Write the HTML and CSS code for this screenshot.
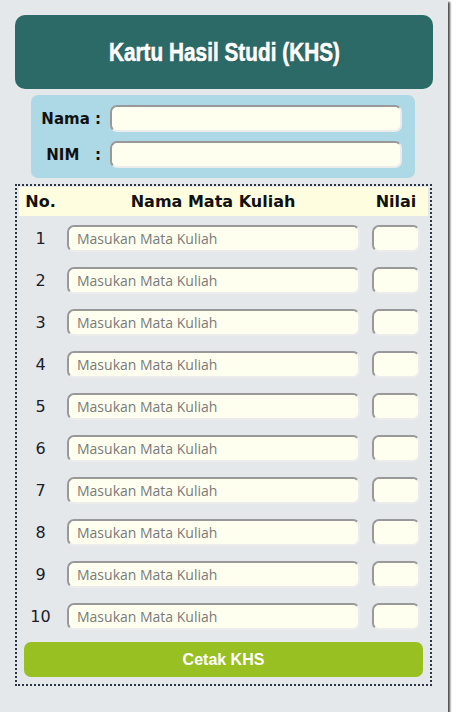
FILE: index.html
```html
<!DOCTYPE html>
<html lang="id">
<head>
<meta charset="utf-8">
<title>Kartu Hasil Studi (KHS)</title>
<link rel="stylesheet" href="styles.css">
</head>
<body>
<div class="page">
  <header class="banner"><h1 class="title">Kartu Hasil Studi (KHS)</h1></header>
  <section class="info">
    <label class="info-label" for="nama">Nama :</label>
    <input class="field info-field" id="nama" type="text">
    <label class="info-label" for="nim">NIM&nbsp;&nbsp; :</label>
    <input class="field info-field" id="nim" type="text">
  </section>
  <section class="grades">
    <div class="head">No.</div>
    <div class="head">Nama Mata Kuliah</div>
    <div class="head">Nilai</div>

    <div class="num">1</div><div class="cell-name"><input class="field name" placeholder="Masukan Mata Kuliah"></div><div class="cell-score"><input class="field score"></div>
    <div class="num">2</div><div class="cell-name"><input class="field name" placeholder="Masukan Mata Kuliah"></div><div class="cell-score"><input class="field score"></div>
    <div class="num">3</div><div class="cell-name"><input class="field name" placeholder="Masukan Mata Kuliah"></div><div class="cell-score"><input class="field score"></div>
    <div class="num">4</div><div class="cell-name"><input class="field name" placeholder="Masukan Mata Kuliah"></div><div class="cell-score"><input class="field score"></div>
    <div class="num">5</div><div class="cell-name"><input class="field name" placeholder="Masukan Mata Kuliah"></div><div class="cell-score"><input class="field score"></div>
    <div class="num">6</div><div class="cell-name"><input class="field name" placeholder="Masukan Mata Kuliah"></div><div class="cell-score"><input class="field score"></div>
    <div class="num">7</div><div class="cell-name"><input class="field name" placeholder="Masukan Mata Kuliah"></div><div class="cell-score"><input class="field score"></div>
    <div class="num">8</div><div class="cell-name"><input class="field name" placeholder="Masukan Mata Kuliah"></div><div class="cell-score"><input class="field score"></div>
    <div class="num">9</div><div class="cell-name"><input class="field name" placeholder="Masukan Mata Kuliah"></div><div class="cell-score"><input class="field score"></div>
    <div class="num">10</div><div class="cell-name"><input class="field name" placeholder="Masukan Mata Kuliah"></div><div class="cell-score"><input class="field score"></div>

    <div class="action"><button class="btn" type="button">Cetak KHS</button></div>
  </section>
</div>
</body>
</html>
```

FILE: styles.css
```css
html, body {
  margin: 0;
  padding: 0;
  background: #ffffff;
}

.page {
  box-sizing: border-box;
  width: 448px;
  height: 712px;
  padding: 15px 15px 0 15px;
  background: #e4e8ea;
  box-shadow: 2px 2px 2px #4a4a4a;
  font-family: "DejaVu Sans", Verdana, sans-serif;
}

.banner {
  height: 74px;
  border-radius: 10px;
  background: #2b6a66;
  display: flex;
  align-items: center;
  justify-content: center;
}

.title {
  margin: 0;
  font-family: "Liberation Sans", Arial, sans-serif;
  font-weight: 700;
  font-size: 26px;
  color: #ffffff;
  -webkit-text-stroke: 0.6px #ffffff;
  text-shadow: 1px 1px 0 rgba(0, 0, 0, 0.3);
  transform: scaleX(0.8);
  white-space: nowrap;
}

.info {
  margin: 6px 18px 0 16px;
  height: 83px;
  box-sizing: border-box;
  padding: 10px 12px 0 0;
  background: #add8e6;
  border-radius: 7px;
  display: grid;
  grid-template-columns: 79px 292px;
  align-content: start;
  row-gap: 9px;
  align-items: center;
}

.info-label {
  font-weight: 700;
  font-size: 15px;
  color: #111111;
  text-align: right;
  padding-right: 9px;
  white-space: nowrap;
}

.field {
  box-sizing: border-box;
  height: 27px;
  margin: 0;
  padding: 0 8px;
  background: #fffff0;
  border-style: solid;
  border-width: 2px;
  border-color: #999999 #ececec #ececec #999999;
  border-radius: 7px;
  font-family: "Open Sans", "Noto Sans", sans-serif;
  font-size: 14px;
  color: #222222;
  outline: none;
}

.info-field {
  width: 292px;
}

.field::placeholder {
  color: #7a7a7a;
}

.grades {
  margin-top: 6px;
  box-sizing: border-box;
  width: 417px;
  height: 502px;
  border: 2px dotted #2b3645;
  padding: 1px 2px 0 2px;
  display: grid;
  grid-template-columns: 43px 302px 64px;
  grid-template-rows: 29px repeat(10, 40px) 43px;
  row-gap: 2px;
  column-gap: 0;
}

.head {
  background: #fffde0;
  font-weight: 700;
  font-size: 16px;
  color: #111111;
  display: flex;
  align-items: center;
  justify-content: center;
}

.num {
  display: flex;
  align-items: center;
  justify-content: center;
  font-size: 16px;
  color: #1c1c2a;
}

.cell-name,
.cell-score {
  display: flex;
  align-items: center;
}

.cell-name {
  padding-left: 5px;
}

.cell-score {
  justify-content: center;
}

.name {
  width: 293px;
}

.score {
  width: 48px;
}

.action {
  grid-column: 1 / -1;
  padding: 4px 5px;
}

.btn {
  display: block;
  width: 100%;
  height: 35px;
  border: 0;
  border-radius: 7px;
  background: #98c022;
  color: #ffffff;
  font-family: "Liberation Sans", Arial, sans-serif;
  font-weight: 700;
  font-size: 16px;
  cursor: pointer;
}
```
